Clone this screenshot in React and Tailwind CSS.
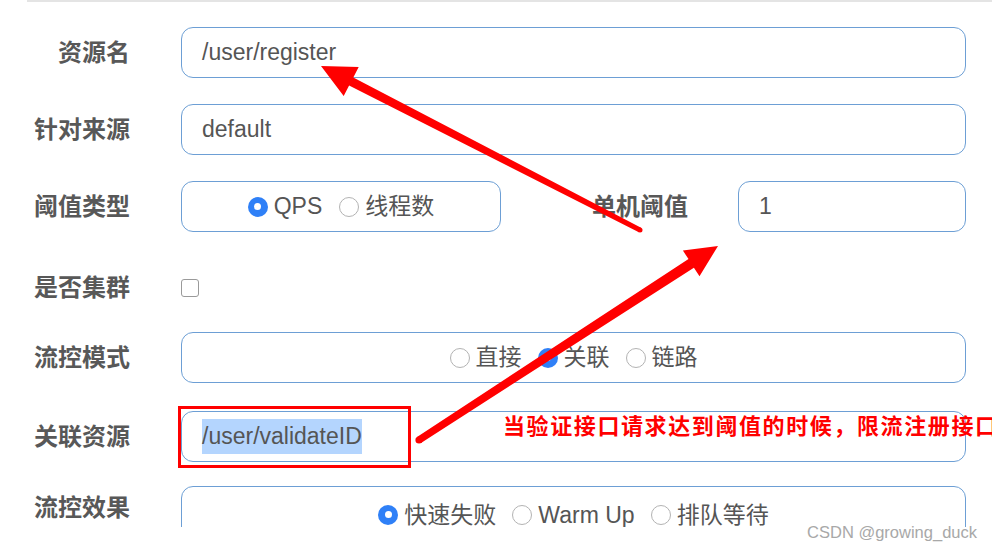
import React from "react";

function Radio({ checked, label }) {
  return (
    <span className="inline-flex items-center gap-[6px]">
      {checked ? (
        <span className="w-[20px] h-[20px] rounded-full bg-[#2f80f7] flex items-center justify-center">
          <span className="w-[7px] h-[7px] rounded-full bg-white" />
        </span>
      ) : (
        <span className="w-[20px] h-[20px] rounded-full border border-[#b3b3b3] bg-white" />
      )}
      <span>{label}</span>
    </span>
  );
}

function Row({ label, children, className = "" }) {
  return (
    <div className={`flex items-center h-[51px] ${className}`}>
      <div className="w-[130px] shrink-0 text-right text-[24px] font-bold text-[#585858]">
        {label}
      </div>
      <div className="ml-[51px] flex-1 h-full flex items-center">{children}</div>
    </div>
  );
}

const box =
  "h-full border-[1.5px] border-[#6d9fd5] rounded-[12px] bg-white flex items-center text-[23px] text-[#555]";

export default function App() {
  return (
    <div className="relative w-[992px] h-[550px] bg-white overflow-hidden font-['Liberation_Sans','Noto_Sans_CJK_SC',sans-serif]">
      <div className="h-[527px] overflow-hidden">
        {/* top divider */}
        <div className="ml-[27px] h-[2px] bg-[#e4e4e4]" />

        <div className="w-[966px] pt-[25px] flex flex-col gap-[26px]">
          <Row label="资源名">
            <div className={`${box} flex-1 pl-[20px]`}>/user/register</div>
          </Row>

          <Row label="针对来源">
            <div className={`${box} flex-1 pl-[20px]`}>default</div>
          </Row>

          <Row label="阈值类型">
            <div className={`${box} w-[320px] justify-center gap-[17px]`}>
              <Radio checked label="QPS" />
              <Radio label="线程数" />
            </div>
            <div className="flex-1 text-right text-[24px] font-bold text-[#585858]">
              单机阈值
            </div>
            <div className={`${box} ml-[50px] w-[228px] pl-[20px]`}>1</div>
          </Row>

          <div className="flex items-center h-[48px] pt-[12px]">
            <div className="w-[130px] shrink-0 text-right text-[24px] font-bold text-[#585858]">
              是否集群
            </div>
            <div className="ml-[51px] w-[18px] h-[18px] rounded-[3px] border border-[#9a9a9a] bg-white" />
          </div>

          <Row label="流控模式">
            <div className={`${box} flex-1 justify-center gap-[16px]`}>
              <Radio label="直接" />
              <Radio checked label="关联" />
              <Radio label="链路" />
            </div>
          </Row>

          <Row label="关联资源" className="mt-[2px]">
            <div className={`${box} flex-1 pl-[20px]`}>
              <span className="bg-[#b4d5fe]">/user/validateID</span>
            </div>
          </Row>

          <Row label="流控效果" className="items-start mt-[2px]">
            <div className="flex-1 h-[60px] border-[1.5px] border-[#6d9fd5] rounded-[12px] bg-white flex items-start pt-[11px] justify-center gap-[16px] text-[23px] text-[#555]">
              <Radio checked label="快速失败" />
              <Radio label="Warm Up" />
              <Radio label="排队等待" />
            </div>
          </Row>
        </div>
      </div>

      {/* annotation: red frame */}
      <div className="absolute left-[178px] top-[406px] w-[233px] h-[62px] border-[3px] border-[#ff0000]" />

      {/* annotation: red note */}
      <div className="absolute left-[503px] top-[410px] whitespace-nowrap text-[22px] font-bold tracking-[1.6px] text-[#ff0000]">
        当验证接口请求达到阈值的时候，限流注册接口
      </div>

      {/* annotation arrows */}
      <svg className="absolute inset-0 pointer-events-none" width="992" height="550">
        <polygon
          fill="#ff0000"
          points="321,66 358.7,66.9 353.3,77.5 641.1,227.8 638.9,232.2 349.1,85.5 343.7,96.1"
        />
        <circle cx="640" cy="230" r="2.5" fill="#ff0000" />
        <polygon
          fill="#ff0000"
          points="718,246 699.5,276.2 693.9,267.7 421,443 417,437 688.5,259.1 682.9,250.6"
        />
        <circle cx="419" cy="440" r="3.6" fill="#ff0000" />
      </svg>

      {/* watermark */}
      <div className="absolute right-[15px] top-[520px] text-[16.5px] text-[#a8a8a8] whitespace-nowrap">
        CSDN @growing_duck
      </div>
    </div>
  );
}
